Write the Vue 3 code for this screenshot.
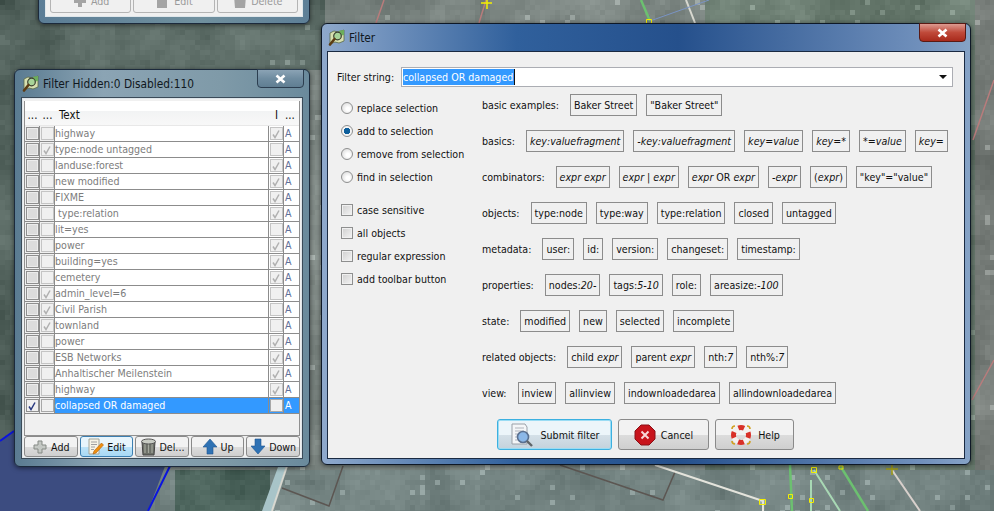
<script setup>
// aerial photo behind the windows, drawn as coarse blocks
const windows = [
  [38, 0, 310, 24],
  [14, 69, 310, 467],
  [321, 23, 971, 465],
];

function hash(x, y) {
  const s = Math.sin(x * 127.1 + y * 311.7) * 43758.5453;
  return s - Math.floor(s);
}

function smooth(x, y) {
  const ix = Math.floor(x);
  const iy = Math.floor(y);
  const fx = x - ix;
  const fy = y - iy;
  const a = hash(ix, iy) * (1 - fx) + hash(ix + 1, iy) * fx;
  const b = hash(ix, iy + 1) * (1 - fx) + hash(ix + 1, iy + 1) * fx;
  return a * (1 - fy) + b * fy;
}

function baseColor(x, y) {
  if (y > 465 && x > 170 && x < 268) return [72, 96, 88];
  if (y > 465 && x >= 268 && x < 480) return [122, 138, 136];
  if (y > 465) return [112, 128, 126];
  if (x < 14 || (y < 69 && x < 321)) return [88, 104, 98];
  if (x > 971) return [118, 124, 120];
  if (x > 700) return [104, 122, 110];
  return [124, 134, 130];
}

const blocks = [];
for (let y = 0; y < 511; y += 5) {
  for (let x = 0; x < 994; x += 5) {
    const hidden = windows.some(
      (w) => x >= w[0] && x + 5 <= w[2] && y >= w[1] && y + 5 <= w[3]
    );
    if (hidden) continue;
    const n =
      (smooth(x / 40, y / 40) - 0.5) * 34 +
      (smooth(x / 12, y / 12) - 0.5) * 16 +
      (hash(x, y) - 0.5) * 8;
    const spot = x > 268 && hash(x + 3, y + 7) > 0.97 ? 32 : 0;
    const c = baseColor(x, y).map((v) => Math.round(v + n + spot));
    blocks.push({ x, y, fill: `rgb(${c[0]},${c[1]},${c[2]})` });
  }
}

const listRows = [
  { text: "highway", inv: true },
  { text: "type:node untagged", off: true },
  { text: "landuse:forest", inv: true },
  { text: "new modified", inv: true },
  { text: "FIXME", inv: true },
  { text: "\u00a0type:relation", inv: true },
  { text: "lit=yes" },
  { text: "power", inv: true },
  { text: "building=yes", inv: true },
  { text: "cemetery", inv: true },
  { text: "admin_level=6", off: true },
  { text: "Civil Parish", off: true },
  { text: "townland", off: true },
  { text: "power", inv: true },
  { text: "ESB Networks", inv: true },
  { text: "Anhaltischer Meilenstein", inv: true },
  { text: "highway", inv: true },
  { text: "collapsed OR damaged", on: true, active: true },
];

const modes = ["replace selection", "add to selection", "remove from selection", "find in selection"];
const flags = ["case sensitive", "all objects", "regular expression", "add toolbar button"];

// text between underscores is the italic part of a button
const helpRows = [
  { label: "basic examples:", items: ["Baker Street", '"Baker Street"'] },
  {
    label: "basics:",
    items: ["_key:valuefragment_", "_-key:valuefragment_", "_key_=_value_", "_key_=_*_", "_*_=_value_", "_key_="],
  },
  {
    label: "combinators:",
    items: ["_expr expr_", "_expr_ | _expr_", "_expr_ OR _expr_", "_-expr_", "(_expr_)", '"key"="value"'],
  },
  { label: "objects:", items: ["type:node", "type:way", "type:relation", "closed", "untagged"] },
  { label: "metadata:", items: ["user:", "id:", "version:", "changeset:", "timestamp:"] },
  { label: "properties:", items: ["nodes:_20-_", "tags:_5-10_", "role:", "areasize:_-100_"] },
  { label: "state:", items: ["modified", "new", "selected", "incomplete"] },
  { label: "related objects:", items: ["child _expr_", "parent _expr_", "nth:_7_", "nth%:_7_"] },
  { label: "view:", items: ["inview", "allinview", "indownloadedarea", "allindownloadedarea"] },
];

function parts(item) {
  return item.split("_").map((t, i) => ({ t, it: i % 2 === 1 }));
}
</script>

<template>
  <div class="desk">
    <svg class="aerial" width="994" height="511" viewBox="0 0 994 511" shape-rendering="crispEdges">
      <rect v-for="b in blocks" :key="b.x + '-' + b.y" :x="b.x" :y="b.y" width="5" height="5" :fill="b.fill" />
      <g shape-rendering="auto" fill="none">
        <path d="M0 441 L60 400 L175 440 L148 511 L0 511 Z" fill="#3c4c80" />
        <path d="M0 441 L14 431 M170 466 L148 511" stroke="#0a14e0" stroke-width="2" />
        <path d="M278 467 L286 467 L272 511 L262 511 Z" fill="#a8c4c8" />
        <path d="M287 466 L272 511" stroke="#d8d8d0" stroke-width="2" />
        <path d="M282 488 L329 506 L343 466" stroke="#5c5652" stroke-width="1.5" />
        <path d="M560 465 L663 500 L675 472" stroke="#5c5652" stroke-width="1.5" />
        <path d="M655 465 L763 501 L763 511" stroke="#e4e4dc" stroke-width="2" />
        <path d="M790 465 L792 511 M841 467 L868 511" stroke="#6cc070" stroke-width="2.5" />
        <path d="M814 470 L840 511 M811 480 L811 511" stroke="#a8d8b4" stroke-width="2" />
        <path d="M892 470 L920 511" stroke="#d8d0cc" stroke-width="2" />
        <path d="M994 360 L972 400 M994 80 L973 140 M384 0 L376 23 M486 0 L479 23" stroke="#b87c7c" stroke-width="1.5" />
        <path d="M641 0 L650 21" stroke="#6cc070" stroke-width="2.5" />
        <path d="M686 0 L695 23" stroke="#d8d8d0" stroke-width="2" />
        <path d="M650 21 L709 0" stroke="#7a94c4" />
        <path d="M481 3 H492 M487 -2 V9" stroke="#f4f000" stroke-width="1.5" />
        <path d="M886 469 H898 M892 463 V475" stroke="#a09a10" stroke-width="1.5" />
        <path d="M646.500 19.500h5v4h-5z M811.500 467.500h5v5h-5z M759.500 499.500h6v5h-6z M788.500 494.500h4v4h-4z M809.500 498.500h4v4h-4z M839 466h4v3h-4z" stroke="#f4f000" />
      </g>
    </svg>

    <!-- window above, only its lower edge is on screen -->
    <div class="win win-top">
      <div class="top-body">
        <button class="tool off">
          <svg width="16" height="16" viewBox="0 0 16 16"><path d="M6 2h4v4h4v4h-4v4H6v-4H2V6h4z" fill="#a4a4a4" /></svg>
          Add
        </button>
        <button class="tool off">
          <svg width="16" height="16" viewBox="0 0 16 16"><path d="M2 1h10v14H2z" fill="#a4a4a4" /></svg>
          Edit
        </button>
        <button class="tool off">
          <svg width="16" height="16" viewBox="0 0 16 16"><path d="M2 3h12l-1 12H3z" fill="#a4a4a4" /></svg>
          Delete
        </button>
      </div>
    </div>

    <!-- filter list -->
    <div class="win win-list">
      <div class="title">
        <svg class="app-icon" width="18" height="18" viewBox="0 0 18 18">
          <path d="M2 4l4-2 4 1 6-2v11l-5 2-4-1-5 2z" fill="#d8e0b0" stroke="#5a6a48" stroke-width=".8" />
          <path d="M11 1.800l5-.8v5l-5 1z" fill="#6cae5c" />
          <circle cx="9.500" cy="7" r="3.800" fill="#a8d498" stroke="#3c4030" stroke-width="1.200" />
          <path d="M6.500 10L2 15.500" stroke="#5c3c14" stroke-width="2.600" stroke-linecap="round" />
        </svg>
        <span>Filter Hidden:0 Disabled:110</span>
        <div class="close idle">
          <svg width="11" height="10" viewBox="0 0 11 10"><path d="M1.500 1.500l8 7M9.500 1.500l-8 7" stroke="#fff" stroke-width="2.600" /></svg>
        </div>
      </div>
      <div class="list-body">
        <div class="table">
          <div class="thead">
            <div class="th c-box">...</div>
            <div class="th c-box">...</div>
            <div class="th c-text">Text</div>
            <div class="th c-box c-i">I</div>
            <div class="th c-a">...</div>
          </div>
          <div v-for="(row, i) in listRows" :key="i" class="tr" :class="{ active: row.active }">
            <div class="td c-box cell-grey"><span class="check dark" :class="{ ticked: row.on }"><svg v-if="row.on" width="10" height="10" viewBox="0 0 10 10"><path d="M2 5.500l2 3 4-7" fill="none" stroke="#2a3a80" stroke-width="1.500" /></svg></span></div>
            <div class="td c-box cell-grey"><span class="check" :class="{ plain: !row.active }"><svg v-if="row.off" width="10" height="10" viewBox="0 0 10 10"><path d="M2 5.500l2 3 4-7" fill="none" stroke="#b0b0b0" stroke-width="1.500" /></svg></span></div>
            <div class="td c-text">{{ row.text }}</div>
            <div class="td c-box c-i"><span class="check" :class="{ plain: !row.active }"><svg v-if="row.inv" width="10" height="10" viewBox="0 0 10 10"><path d="M2 5.500l2 3 4-7" fill="none" stroke="#b0b0b0" stroke-width="1.500" /></svg></span></div>
            <div class="td c-a">A</div>
          </div>
        </div>
        <div class="list-buttons">
          <button class="tool">
            <svg width="16" height="16" viewBox="0 0 16 16"><path d="M6 2h4v4h4v4h-4v4H6v-4H2V6h4z" fill="#c4c8c4" stroke="#858a85" /></svg>
            Add
          </button>
          <button class="tool hot">
            <svg width="17" height="17" viewBox="0 0 17 17">
              <path d="M2 1h10v15H2z" fill="#f6f4e8" stroke="#a4a498" />
              <path d="M4 4h6M4 6.500h6M4 9h4M4 11.500h3" stroke="#a0a0a0" />
              <path d="M14.500 5L7 13l-1 3 3-1 7.500-8z" fill="#f09010" stroke="#b06008" stroke-width=".6" />
            </svg>
            Edit
          </button>
          <button class="tool">
            <svg width="17" height="18" viewBox="0 0 17 18">
              <path d="M2 4h13l-1 13H3z" fill="#6c7068" stroke="#444" />
              <path d="M5 6v9M8.500 6v9M12 6v9" stroke="#a4a89e" stroke-width="1.200" />
              <ellipse cx="8.500" cy="3.500" rx="7" ry="2.500" fill="#c8ccc4" stroke="#555" />
            </svg>
            Del...
          </button>
          <button class="tool">
            <svg width="16" height="17" viewBox="0 0 16 17"><path d="M8 1l7 8h-4v7H5V9H1z" fill="#2f72b4" stroke="#1e5590" stroke-width=".6" /></svg>
            Up
          </button>
          <button class="tool">
            <svg width="16" height="17" viewBox="0 0 16 17"><path d="M8 16L1 8h4V1h6v7h4z" fill="#2f72b4" stroke="#1e5590" stroke-width=".6" /></svg>
            Down
          </button>
        </div>
      </div>
    </div>

    <!-- search dialog -->
    <div class="win win-main">
      <div class="title">
        <svg class="app-icon" width="18" height="18" viewBox="0 0 18 18">
          <path d="M2 4l4-2 4 1 6-2v11l-5 2-4-1-5 2z" fill="#d8e0b0" stroke="#5a6a48" stroke-width=".8" />
          <path d="M11 1.800l5-.8v5l-5 1z" fill="#6cae5c" />
          <circle cx="9.500" cy="7" r="3.800" fill="#a8d498" stroke="#3c4030" stroke-width="1.200" />
          <path d="M6.500 10L2 15.500" stroke="#5c3c14" stroke-width="2.600" stroke-linecap="round" />
        </svg>
        <span>Filter</span>
        <div class="close red">
          <svg width="11" height="10" viewBox="0 0 11 10"><path d="M1.500 1.500l8 7M9.500 1.500l-8 7" stroke="#fff" stroke-width="2.600" /></svg>
        </div>
      </div>
      <div class="main-body">
        <div class="filter-line">
          <span class="filter-label">Filter string:</span>
          <div class="combo">
            <span class="picked">collapsed OR damaged</span>
            <span class="arrow"></span>
          </div>
        </div>
        <div class="columns">
          <div class="options">
            <div class="group">
              <label v-for="(m, i) in modes" :key="m" class="opt">
                <span class="radio" :class="{ sel: i === 1 }"></span>{{ m }}
              </label>
            </div>
            <div class="group">
              <label v-for="f in flags" :key="f" class="opt">
                <span class="box"></span>{{ f }}
              </label>
            </div>
          </div>
          <div class="help">
            <div v-for="row in helpRows" :key="row.label" class="help-row">
              <span class="help-label">{{ row.label }}</span>
              <span v-for="item in row.items" :key="item" class="chip">
                <template v-for="(p, i) in parts(item)" :key="i"><i v-if="p.it">{{ p.t }}</i><template v-else>{{ p.t }}</template></template>
              </span>
            </div>
          </div>
        </div>
        <div class="actions">
          <button class="big hot submit">
            <svg width="26" height="26" viewBox="0 0 26 26">
              <path d="M3 2h13l2 3v17H3z" fill="#f4f6f8" stroke="#9aa0a8" />
              <path d="M6 6h9M6 9h9M6 12h4M6 15h3M6 18h4" stroke="#b0b4bc" />
              <circle cx="14" cy="15" r="5.500" fill="#8cb8e8" stroke="#5a7090" stroke-width="1.600" />
              <path d="M18 19l5 5" stroke="#606468" stroke-width="2.400" />
            </svg>
            Submit filter
          </button>
          <button class="big cancel">
            <svg width="22" height="22" viewBox="0 0 22 22">
              <path d="M7 1h8l6 6v8l-6 6H7l-6-6V7z" fill="#c8141c" stroke="#8a1016" />
              <path d="M7.500 7.500l7 7M14.500 7.500l-7 7" stroke="#f8d8d8" stroke-width="2" />
            </svg>
            Cancel
          </button>
          <button class="big helpbtn">
            <svg width="24" height="24" viewBox="0 0 24 24">
              <path d="M3 6a3 3 0 0 1 3-3M18 3a3 3 0 0 1 3 3M21 18a3 3 0 0 1-3 3M6 21a3 3 0 0 1-3-3" fill="none" stroke="#d0a020" stroke-width="1.600" />
              <circle cx="12" cy="12" r="7.500" fill="none" stroke="#f4f0ee" stroke-width="5" />
              <circle cx="12" cy="12" r="7.500" fill="none" stroke="#d83028" stroke-width="5" stroke-dasharray="5.900 5.900" stroke-dashoffset="3" />
            </svg>
            Help
          </button>
        </div>
      </div>
    </div>
  </div>
</template>

<style scoped>
.desk {
  position: relative;
  width: 994px;
  height: 511px;
  overflow: hidden;
  font-family: "DejaVu Sans Condensed", "DejaVu Sans", sans-serif;
  font-stretch: condensed;
  font-size: 10.600px;
  color: #111;
}

.aerial {
  position: absolute;
  left: 0;
  top: 0;
}

/* windows */
.win {
  position: absolute;
  display: flex;
  flex-direction: column;
  box-sizing: border-box;
  border-radius: 6px;
  border: 1px solid #1c2a3c;
  box-shadow: 0 1px 5px rgba(0, 0, 0, 0.55);
}

.win-top {
  left: 38px;
  top: -20px;
  width: 272px;
  height: 44px;
  padding: 0 6px 6px;
  background: linear-gradient(90deg, #5b7d96, #70909e 60%, #5d7f97);
}

.top-body {
  flex: 1;
  display: flex;
  align-items: flex-end;
  gap: 2px;
  padding: 0 4px 3px;
  background: #f0f0f0;
  border: 1px solid #dfe6ea;
}

.win-list {
  left: 14px;
  top: 69px;
  width: 296px;
  height: 398px;
  padding: 0 6px 8px;
  background: linear-gradient(90deg, #5a7b91, #8ba4b4 30%, #7f9aa8 70%, #6a8a9c);
}

.win-main {
  left: 321px;
  top: 23px;
  width: 650px;
  height: 442px;
  padding: 0 5px 6px;
  background: linear-gradient(90deg, #8fa9cc 0, #30609c 30%, #25508c 55%, #6f8fbb 92%, #86a3c6);
  border-color: #0e1826;
}

.title {
  position: relative;
  display: flex;
  align-items: center;
  gap: 3px;
  height: 27px;
  flex-shrink: 0;
  font-size: 11.800px;
  color: #101820;
  padding-left: 1px;
}

.app-icon {
  flex-shrink: 0;
}

.close {
  position: absolute;
  right: -1px;
  top: -1px;
  width: 47px;
  height: 19px;
  display: flex;
  align-items: center;
  justify-content: center;
  box-sizing: border-box;
  border-radius: 0 0 4px 4px;
  border: 1px solid #2c3e50;
}

.close.idle {
  background: linear-gradient(#8ba3b5, #6f8ca0 50%, #607e92);
}

.close.red {
  background: linear-gradient(#dd9a90, #c04a3a 50%, #a82a1c);
  border-color: #5a1a14;
}

/* filter list */
.list-body {
  flex: 1;
  display: flex;
  flex-direction: column;
  justify-content: space-between;
  box-sizing: border-box;
  padding: 2px 1px 1px;
  background: #f0f0f0;
  border: 1px solid #3a4a58;
  outline: 1px solid #dfe6ea;
  outline-offset: -2px;
}

.table {
  display: flex;
  flex-direction: column;
  height: 335px;
  box-sizing: border-box;
  margin: 1px 1px 0;
  background: #f0f0f0;
  border-left: 1px solid #909090;
  border-right: 1px solid #909090;
  border-bottom: 1px solid #909090;
}

.thead {
  display: flex;
  height: 25px;
  box-sizing: border-box;
  padding-top: 7px;
  background: linear-gradient(#fff 10px, #f2f3f4 10px, #f8f8f8 24px);
  border-bottom: 1px solid #e8e8e8;
  font-size: 11.500px;
}

.th {
  line-height: 14px;
  color: #111;
  white-space: nowrap;
  overflow: hidden;
}

.c-box {
  width: 15px;
  flex-shrink: 0;
  display: flex;
  justify-content: center;
  align-items: center;
}

.c-text {
  flex: 1;
  padding-left: 0;
  min-width: 0;
}

.th.c-text {
  padding-left: 4px;
}

.c-i {
  width: 15px;
}

.c-a {
  width: 15px;
  flex-shrink: 0;
  padding-left: 1px;
  box-sizing: border-box;
}

.th.c-box,
.th.c-a {
  align-items: flex-start;
}

.tr {
  display: flex;
  height: 16px;
  box-sizing: border-box;
  background: #fff;
  border-bottom: 1px solid #8c8c8c;
  color: #7c7c7c;
  line-height: 15px;
}

.td {
  box-sizing: border-box;
  border-right: 1px solid #8c8c8c;
  height: 15px;
  white-space: nowrap;
}

.td.c-a {
  border-right: 0;
  color: #5f6f98;
}

.cell-grey {
  background: #f0f0f0;
}

.tr.active,
.tr.active .cell-grey {
  background: #f0f0f0;
}

.tr.active .c-text,
.tr.active .c-a,
.tr.active .c-i {
  background: #3399ff;
  color: #fff;
}

.check {
  display: flex;
  width: 13px;
  height: 13px;
  align-items: center;
  justify-content: center;
  box-sizing: border-box;
  border: 1px solid #a8a8a8;
  background: #f0f0f0;
}

.check.dark {
  background: #dcdcdc;
  box-shadow: inset 0 0 0 1px #ececec;
  border-color: #8f8f8f;
}

.check.dark.ticked {
  background: #f0f0f0;
  box-shadow: none;
}

.check.plain {
  border-color: #c4c4c4;
}

.list-buttons {
  display: flex;
  gap: 2px;
  padding: 0 1px;
}

.tool {
  flex: 1;
  display: flex;
  align-items: center;
  justify-content: center;
  gap: 3px;
  height: 21px;
  padding: 0;
  font: inherit;
  font-stretch: condensed;
  color: #111;
  border: 1px solid #8a8a8a;
  border-radius: 3px;
  background: linear-gradient(#f2f2f2 50%, #dcdcdc 52%, #cfcfcf);
  white-space: nowrap;
}

.tool.off {
  height: 24px;
  color: #9a9a9a;
  background: #f0f0f0;
  border-color: #b4b4b4;
}

.tool.hot {
  background: linear-gradient(#e8f5fc 50%, #bde3f8 52%, #a8d9f5);
  border-color: #3c7fb1;
}

/* dialog body */
.main-body {
  flex: 1;
  display: flex;
  flex-direction: column;
  box-sizing: border-box;
  background: #f0f0f0;
  border: 1px solid #1a2a42;
  padding: 15px 11px 8px 9px;
}

.filter-line {
  display: flex;
  align-items: center;
  gap: 5px;
}

.filter-label {
  width: 59px;
  white-space: nowrap;
}

.combo {
  flex: 1;
  display: flex;
  align-items: center;
  justify-content: space-between;
  height: 20px;
  box-sizing: border-box;
  padding: 0 5px 0 1px;
  background: #fff;
  border: 1px solid #abadb3;
}

.picked {
  background: #3399ff;
  color: #fff;
  line-height: 16px;
  padding: 0 1px 0 0;
  border-right: 1px solid #111;
}

.arrow {
  width: 0;
  height: 0;
  border-left: 4px solid transparent;
  border-right: 4px solid transparent;
  border-top: 4px solid #111;
}

.columns {
  display: flex;
  margin-top: 7px;
}

.options {
  width: 145px;
  flex-shrink: 0;
  padding: 2px 0 0 4px;
  box-sizing: border-box;
}

.group {
  display: flex;
  flex-direction: column;
  margin-bottom: 10px;
}

.opt {
  display: flex;
  align-items: center;
  gap: 4px;
  height: 23px;
  white-space: nowrap;
}

.radio {
  width: 12px;
  height: 12px;
  box-sizing: border-box;
  border-radius: 50%;
  border: 1px solid #8e8f8f;
  background: radial-gradient(circle at 60% 60%, #fff 20%, #d8d8d8 90%);
}

.radio.sel {
  background: radial-gradient(circle, #0d5f9c 0 3px, #f4f4f4 3.500px);
}

.box {
  width: 12px;
  height: 12px;
  box-sizing: border-box;
  border: 1px solid #8e8f8f;
  background: linear-gradient(135deg, #cfcfcf, #f4f4f4);
  box-shadow: inset 0 0 0 1px #f0f0f0;
}

.help {
  flex: 1;
  display: flex;
  flex-direction: column;
  gap: 14px;
}

.help-row {
  display: flex;
  align-items: center;
  gap: 9px;
  height: 22px;
}

.help-label {
  margin-right: 2px;
  white-space: nowrap;
}

.chip {
  display: flex;
  align-items: center;
  height: 22px;
  box-sizing: border-box;
  padding: 0 3px;
  border: 1px solid #8c8c8c;
  white-space: pre;
}

.actions {
  display: flex;
  gap: 6px;
  margin-top: 15px;
  padding-left: 160px;
}

.big {
  display: flex;
  align-items: center;
  justify-content: center;
  gap: 5px;
  height: 31px;
  padding: 0;
  font: inherit;
  font-stretch: condensed;
  color: #111;
  border: 1px solid #8a8a8a;
  border-radius: 3px;
  background: linear-gradient(#f2f2f2 50%, #dcdcdc 52%, #cfcfcf);
}

.big.hot {
  background: linear-gradient(#ecf5fa 50%, #d4e0e8 52%, #c4d2dc);
  border-color: #3cb0e0;
  box-shadow: 0 0 0 1px #9adcf4 inset;
}

.submit {
  width: 115px;
}

.cancel {
  width: 91px;
}

.helpbtn {
  width: 79px;
}
</style>

<style>
html,
body {
  margin: 0;
  background: #6f7f78;
}
</style>
